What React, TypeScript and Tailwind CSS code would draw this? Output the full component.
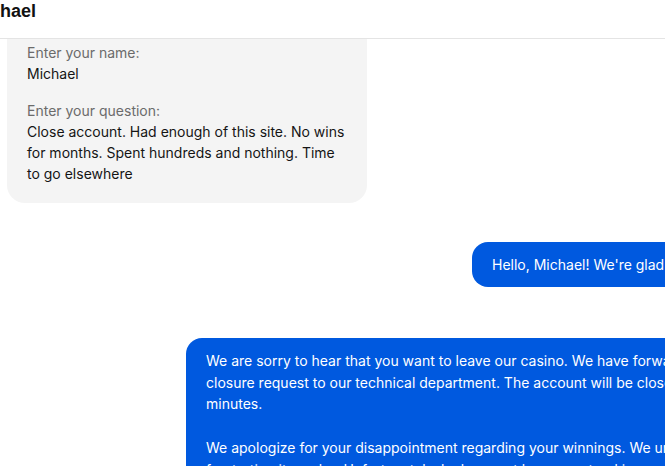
import React from "react";

export default function App() {
  return (
    <div className="w-[665px] h-[466px] overflow-hidden bg-white flex flex-col" style={{ fontFamily: "Inter, 'Noto Sans', sans-serif" }}>
      <header className="h-[39px] shrink-0 border-b border-[#e4e4e4] bg-white flex items-start overflow-hidden">
        <div
          className="-ml-[30px] pt-0 text-[18px] leading-[22px] font-bold text-[#111] whitespace-nowrap"
          style={{ fontFamily: "'Liberation Sans', Arial, sans-serif" }}
        >
          Michael
        </div>
      </header>
      <main className="flex-1 overflow-hidden flex flex-col">
        <div className="-mt-[17px] ml-[7px] w-[360px] shrink-0 rounded-[18px] bg-[#f4f4f4] px-5 pt-5 pb-[19px] text-[14px] leading-[21px] text-[#151515]">
          <div className="text-[#6b6b6b]">Enter your name:</div>
          <div>Michael</div>
          <div className="h-4" />
          <div className="text-[#6b6b6b]">Enter your question:</div>
          <div>Close account. Had enough of this site. No wins for months. Spent hundreds and nothing. Time to go elsewhere</div>
        </div>
        <div className="mt-[39px] ml-[472px] w-[400px] shrink-0 rounded-[16px] bg-[#0059df] px-5 py-3 text-[14px] leading-[21px] text-white whitespace-nowrap">
          Hello, Michael! We're glad to see you. How can we help you?
        </div>
        <div className="mt-[51px] ml-[186px] w-[640px] shrink-0 rounded-[16px] bg-[#0059df] px-5 py-3 text-[14px] leading-[21.7px] text-white whitespace-nowrap">
          <div>We are sorry to hear that you want to leave our casino. We have forwarded your account</div>
          <div>closure request to our technical department. The account will be closed within 10</div>
          <div>minutes.</div>
          <div className="h-[21.7px]" />
          <div>We apologize for your disappointment regarding your winnings. We understand how</div>
          <div>frustrating it can be. Unfortunately, luck cannot be guaranteed in games of chance.</div>
        </div>
      </main>
    </div>
  );
}
